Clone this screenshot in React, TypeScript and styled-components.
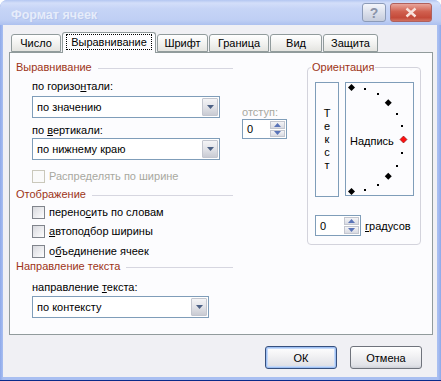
import styled, { createGlobalStyle } from 'styled-components'
import { FC, ReactNode } from 'react'

const GlobalStyle = createGlobalStyle`
  html, body {
    margin: 0;
    padding: 0;
    width: 441px;
    height: 381px;
    overflow: hidden;
    background: #ffffff;
  }
  * {
    box-sizing: border-box;
  }
`

const FONT = `"Liberation Sans", Arial, sans-serif`
const HEADER_RED = '#9c3418'

const Window = styled.div`
  width: 441px;
  height: 381px;
  display: flex;
  flex-direction: column;
  border-radius: 7px 7px 0 0;
  background: linear-gradient(to right, #8ea9ea, #a9bff1 3px, #a9bff1 calc(100% - 3px), #8ea9ea);
  border-bottom: 1px solid #0a2a8a;
  font-family: ${FONT};
  font-size: 11px;
  color: #000;
  overflow: hidden;
`

const TitleBar = styled.div`
  height: 25px;
  flex: none;
  display: flex;
  align-items: center;
  padding: 0 9px 0 11px;
  border-radius: 7px 7px 0 0;
  background: linear-gradient(
    to bottom,
    #b3c6f1 0%,
    #d3def9 12%,
    #c6d4f6 35%,
    #bfcff4 80%,
    #adc1ef 100%
  );
`

const Title = styled.div`
  flex: 1;
  font-weight: bold;
  font-size: 12.5px;
  color: #e6ecfa;
  text-shadow: 1px 1px 0 #b4c5ee;
  padding-top: 5px;
`

const CaptionButton = styled.div<{ $wide?: boolean; $red?: boolean }>`
  width: ${(p) => (p.$wide ? 42 : 24)}px;
  height: 19px;
  margin-left: ${(p) => (p.$wide ? 4 : 0)}px;
  border: 1px solid ${(p) => (p.$red ? '#b0605c' : '#8c9bb8')};
  border-radius: 3px;
  display: flex;
  align-items: center;
  justify-content: center;
  background: ${(p) =>
    p.$red
      ? 'linear-gradient(to bottom, #e9a59b, #d0604f 45%, #c44a3a 80%, #d2705f)'
      : 'linear-gradient(to bottom, #f4f6fb, #d7dce8 60%, #c5ccdc)'};
  color: ${(p) => (p.$red ? '#f6d9d2' : '#8a93a8')};
  font-weight: bold;
  font-size: 14px;
`

const Body = styled.div`
  flex: 1;
  margin: 0 4px 3px 3px;
  background: #f0f0f4;
  display: flex;
  flex-direction: column;
  padding: 8px 4px 0 6px;
`

const TabRow = styled.div`
  display: flex;
  align-items: flex-end;
  gap: 1px;
  padding-left: 2px;
  height: 20px;
  margin-bottom: -1px;
  position: relative;
  z-index: 1;
`

const Tab = styled.div<{ $w: number; $active?: boolean }>`
  width: ${(p) => p.$w}px;
  height: ${(p) => (p.$active ? 21 : 18)}px;
  border: 1px solid #919b9c;
  border-bottom: ${(p) => (p.$active ? 'none' : '1px solid #919b9c')};
  border-radius: 3px 3px 0 0;
  background: ${(p) =>
    p.$active ? '#fcfcfe' : 'linear-gradient(to bottom, #ffffff, #f0f0ee 60%, #e4e4e0)'};
  display: flex;
  align-items: center;
  justify-content: center;
  padding-bottom: ${(p) => (p.$active ? 2 : 0)}px;
  margin-bottom: ${(p) => (p.$active ? 0 : 1)}px;
`

const FocusText = styled.span`
  outline: 1px dotted #000;
  outline-offset: 1px;
  padding: 0 3px;
`

const Panel = styled.div`
  height: 283px;
  border: 1px solid #919b9c;
  background: #fcfcfe;
  display: flex;
  padding: 7px 0 0 6px;
`

const LeftCol = styled.div`
  width: 291px;
  display: flex;
  flex-direction: column;
`

const SectionHeader = styled.div<{ $mt?: number }>`
  width: 217px;
  height: 14px;
  line-height: 14px;
  display: flex;
  align-items: center;
  gap: 6px;
  color: ${HEADER_RED};
  margin-top: ${(p) => p.$mt ?? 0}px;
  &::after {
    content: '';
    flex: 1;
    height: 1px;
    background: #d6d6e0;
    margin-top: 2px;
  }
`

const AlignGrid = styled.div`
  display: grid;
  grid-template-columns: 188px 45px;
  column-gap: 22px;
  padding-left: 16px;
`

const Stack = styled.div<{ $indent?: number }>`
  display: flex;
  flex-direction: column;
  padding-left: ${(p) => p.$indent ?? 0}px;
`

const Label = styled.div<{ $mt?: number; $disabled?: boolean }>`
  height: 14px;
  line-height: 14px;
  margin-top: ${(p) => p.$mt ?? 0}px;
  color: ${(p) => (p.$disabled ? '#a8a8a0' : '#000')};
  white-space: nowrap;
`

const Mn = styled.span`
  text-decoration: underline;
`

const ComboBox = styled.div<{ $w: number; $mt?: number }>`
  width: ${(p) => p.$w}px;
  height: 22px;
  margin-top: ${(p) => p.$mt ?? 0}px;
  border: 1px solid #7f9db9;
  background: #fff;
  display: flex;
  align-items: center;
  padding: 1px;
`

const ComboText = styled.div`
  flex: 1;
  padding-left: 3px;
`

const DropButton = styled.div`
  width: 16px;
  height: 18px;
  border: 1px solid #c3c6cf;
  border-radius: 1px;
  background: linear-gradient(to bottom, #f4f4f6, #e2e3e8 50%, #c9cbd3);
  display: flex;
  align-items: center;
  justify-content: center;
`

const DownArrow = () => (
  <svg width="7" height="4" viewBox="0 0 7 4">
    <path d="M0 0 H7 L3.5 4 Z" fill="#4d6185" />
  </svg>
)

const SpinBox = styled.div<{ $w: number; $h: number }>`
  width: ${(p) => p.$w}px;
  height: ${(p) => p.$h}px;
  border: 1px solid #7f9db9;
  background: #fff;
  display: flex;
  align-items: stretch;
  padding: 1px;
`

const SpinValue = styled.div`
  flex: 1;
  display: flex;
  align-items: center;
  padding-left: 3px;
`

const SpinButtons = styled.div`
  width: 15px;
  display: flex;
  flex-direction: column;
  gap: 1px;
`

const SpinHalf = styled.div`
  flex: 1;
  border: 1px solid #c3c6cf;
  background: linear-gradient(to bottom, #f4f4f6, #d8dae2);
  display: flex;
  align-items: center;
  justify-content: center;
`

const SpinArrow: FC<{ up?: boolean }> = ({ up }) => (
  <svg width="7" height="4" viewBox="0 0 7 4">
    <path d={up ? 'M0 4 H7 L3.5 0 Z' : 'M0 0 H7 L3.5 4 Z'} fill="#5a74b8" />
  </svg>
)

const CheckRow = styled.div<{ $mt?: number; $disabled?: boolean }>`
  display: flex;
  align-items: center;
  gap: 4px;
  height: 14px;
  padding-left: 16px;
  margin-top: ${(p) => p.$mt ?? 0}px;
  color: ${(p) => (p.$disabled ? '#a8a8a0' : '#000')};
`

const CheckBox = styled.div<{ $disabled?: boolean }>`
  width: 13px;
  height: 13px;
  border: 1px solid ${(p) => (p.$disabled ? '#cac8bb' : '#80848c')};
  background: ${(p) =>
    p.$disabled ? '#fafafa' : 'linear-gradient(135deg, #d8d9de, #f6f6f8 80%, #ffffff)'};
`

const Orientation = styled.div`
  position: relative;
  width: 114px;
  height: 178px;
  margin-top: 7px;
  border: 1px solid #d3d3dc;
  border-radius: 4px;
  padding: 14px 0 0 7px;
  display: flex;
  flex-direction: column;
`

const Legend = styled.div`
  position: absolute;
  top: -8px;
  left: 3px;
  padding: 0 1px;
  background: #fcfcfe;
  color: ${HEADER_RED};
  line-height: 14px;
`

const OrientBoxes = styled.div`
  display: flex;
  gap: 6px;
  align-items: flex-start;
`

const VerticalText = styled.div`
  width: 24px;
  height: 115px;
  border: 1px solid #7f9db9;
  display: flex;
  flex-direction: column;
  align-items: center;
  justify-content: center;
  line-height: 13px;
  padding-bottom: 1px;
`

const ArcBox = styled.div`
  width: 69px;
  height: 114px;
  border: 1px solid #7f9db9;
`

const DegreesRow = styled.div`
  display: flex;
  align-items: center;
  gap: 4px;
  margin-top: 18px;
`

const Footer = styled.div`
  display: flex;
  justify-content: flex-end;
  gap: 13px;
  padding: 11px 11px 0 0;
`

const Button = styled.div<{ $default?: boolean }>`
  width: 72px;
  height: 23px;
  border: 1px solid ${(p) => (p.$default ? '#36507e' : '#6f737c')};
  border-radius: 3px;
  background: linear-gradient(to bottom, #ffffff, #f2f2f4 40%, #e2e3e8 85%, #d2d4dc);
  box-shadow: ${(p) =>
    p.$default ? 'inset 0 0 0 1px #9fc0f3, inset 0 0 0 2px #c6daf9' : 'inset 0 -1px 0 #cfd1d8'};
  display: flex;
  align-items: center;
  justify-content: center;
`

const Combo: FC<{ w: number; mt?: number; children: ReactNode }> = ({ w, mt, children }) => (
  <ComboBox $w={w} $mt={mt}>
    <ComboText>{children}</ComboText>
    <DropButton>
      <DownArrow />
    </DropButton>
  </ComboBox>
)

const Spin: FC<{ w: number; h: number }> = ({ w, h }) => (
  <SpinBox $w={w} $h={h}>
    <SpinValue>0</SpinValue>
    <SpinButtons>
      <SpinHalf>
        <SpinArrow up />
      </SpinHalf>
      <SpinHalf>
        <SpinArrow />
      </SpinHalf>
    </SpinButtons>
  </SpinBox>
)

const diamond = (x: number, y: number, s: number) =>
  `M${x} ${y - s} L${x + s} ${y} L${x} ${y + s} L${x - s} ${y} Z`

const Arc = () => {
  const cx = 5.5
  const cy = 56.5
  const r = 52
  const small = [75, 60, 30, 15, -15, -30, -60, -75]
  const big = [90, 45, -45, -90]
  return (
    <svg width="67" height="112" viewBox="0 0 67 112">
      {small.map((a) => {
        const rad = (a * Math.PI) / 180
        return (
          <rect
            key={a}
            x={Math.round(cx + r * Math.cos(rad)) - 1}
            y={Math.round(cy - r * Math.sin(rad)) - 1}
            width="2"
            height="2"
            fill="#000"
          />
        )
      })}
      {big.map((a) => {
        const rad = (a * Math.PI) / 180
        return (
          <path
            key={a}
            d={diamond(cx + r * Math.cos(rad), cy - r * Math.sin(rad), 3.5)}
            fill="#000"
          />
        )
      })}
      <path d={diamond(cx + r, cy, 3.5)} fill="#ff1010" stroke="#7a1010" strokeWidth="0.6" />
      <text x="4" y="62" fontFamily={FONT} fontSize="11" fill="#000">
        Надпись
      </text>
    </svg>
  )
}

export default function App() {
  return (
    <>
      <GlobalStyle />
      <Window>
        <TitleBar>
          <Title>Формат ячеек</Title>
          <CaptionButton>?</CaptionButton>
          <CaptionButton $wide $red>
            <svg width="12" height="11" viewBox="0 0 12 11">
              <path d="M1.5 1.5 L10.5 9.5 M10.5 1.5 L1.5 9.5" stroke="#f8e2dc" strokeWidth="2.4" />
            </svg>
          </CaptionButton>
        </TitleBar>
        <Body>
          <TabRow>
            <Tab $w={50}>Число</Tab>
            <Tab $w={94} $active>
              <FocusText>Выравнивание</FocusText>
            </Tab>
            <Tab $w={51}>Шрифт</Tab>
            <Tab $w={60}>Граница</Tab>
            <Tab $w={52}>Вид</Tab>
            <Tab $w={55}>Защита</Tab>
          </TabRow>
          <Panel>
            <LeftCol>
              <SectionHeader>Выравнивание</SectionHeader>
              <AlignGrid>
                <Stack>
                  <Label $mt={5}>
                    по горизо<Mn>н</Mn>тали:
                  </Label>
                  <Combo w={188} mt={3}>
                    по значению
                  </Combo>
                  <Label $mt={5}>
                    по <Mn>в</Mn>ертикали:
                  </Label>
                  <Combo w={188} mt={1}>
                    по нижнему краю
                  </Combo>
                </Stack>
                <Stack>
                  <Label $mt={31} $disabled>
                    отступ:
                  </Label>
                  <Spin w={45} h={20} />
                </Stack>
              </AlignGrid>
              <CheckRow $mt={9} $disabled>
                <CheckBox $disabled />
                Распределять по ширине
              </CheckRow>
              <SectionHeader $mt={4}>Отображение</SectionHeader>
              <CheckRow $mt={4}>
                <CheckBox />
                <span>
                  перено<Mn>с</Mn>ить по словам
                </span>
              </CheckRow>
              <CheckRow $mt={5}>
                <CheckBox />
                <span>
                  <Mn>а</Mn>втоподбор ширины
                </span>
              </CheckRow>
              <CheckRow $mt={6}>
                <CheckBox />
                <span>
                  о<Mn>б</Mn>ъединение ячеек
                </span>
              </CheckRow>
              <SectionHeader $mt={1}>Направление текста</SectionHeader>
              <Stack $indent={16}>
                <Label $mt={7}>
                  направление <Mn>т</Mn>екста:
                </Label>
                <Combo w={177} mt={2}>
                  по контексту
                </Combo>
              </Stack>
            </LeftCol>
            <Orientation>
              <Legend>Ориентация</Legend>
              <OrientBoxes>
                <VerticalText>
                  <span>Т</span>
                  <span>е</span>
                  <span>к</span>
                  <span>с</span>
                  <span>т</span>
                </VerticalText>
                <ArcBox>
                  <Arc />
                </ArcBox>
              </OrientBoxes>
              <DegreesRow>
                <Spin w={46} h={21} />
                <span>
                  <Mn>г</Mn>радусов
                </span>
              </DegreesRow>
            </Orientation>
          </Panel>
          <Footer>
            <Button $default>ОК</Button>
            <Button>Отмена</Button>
          </Footer>
        </Body>
      </Window>
    </>
  )
}
